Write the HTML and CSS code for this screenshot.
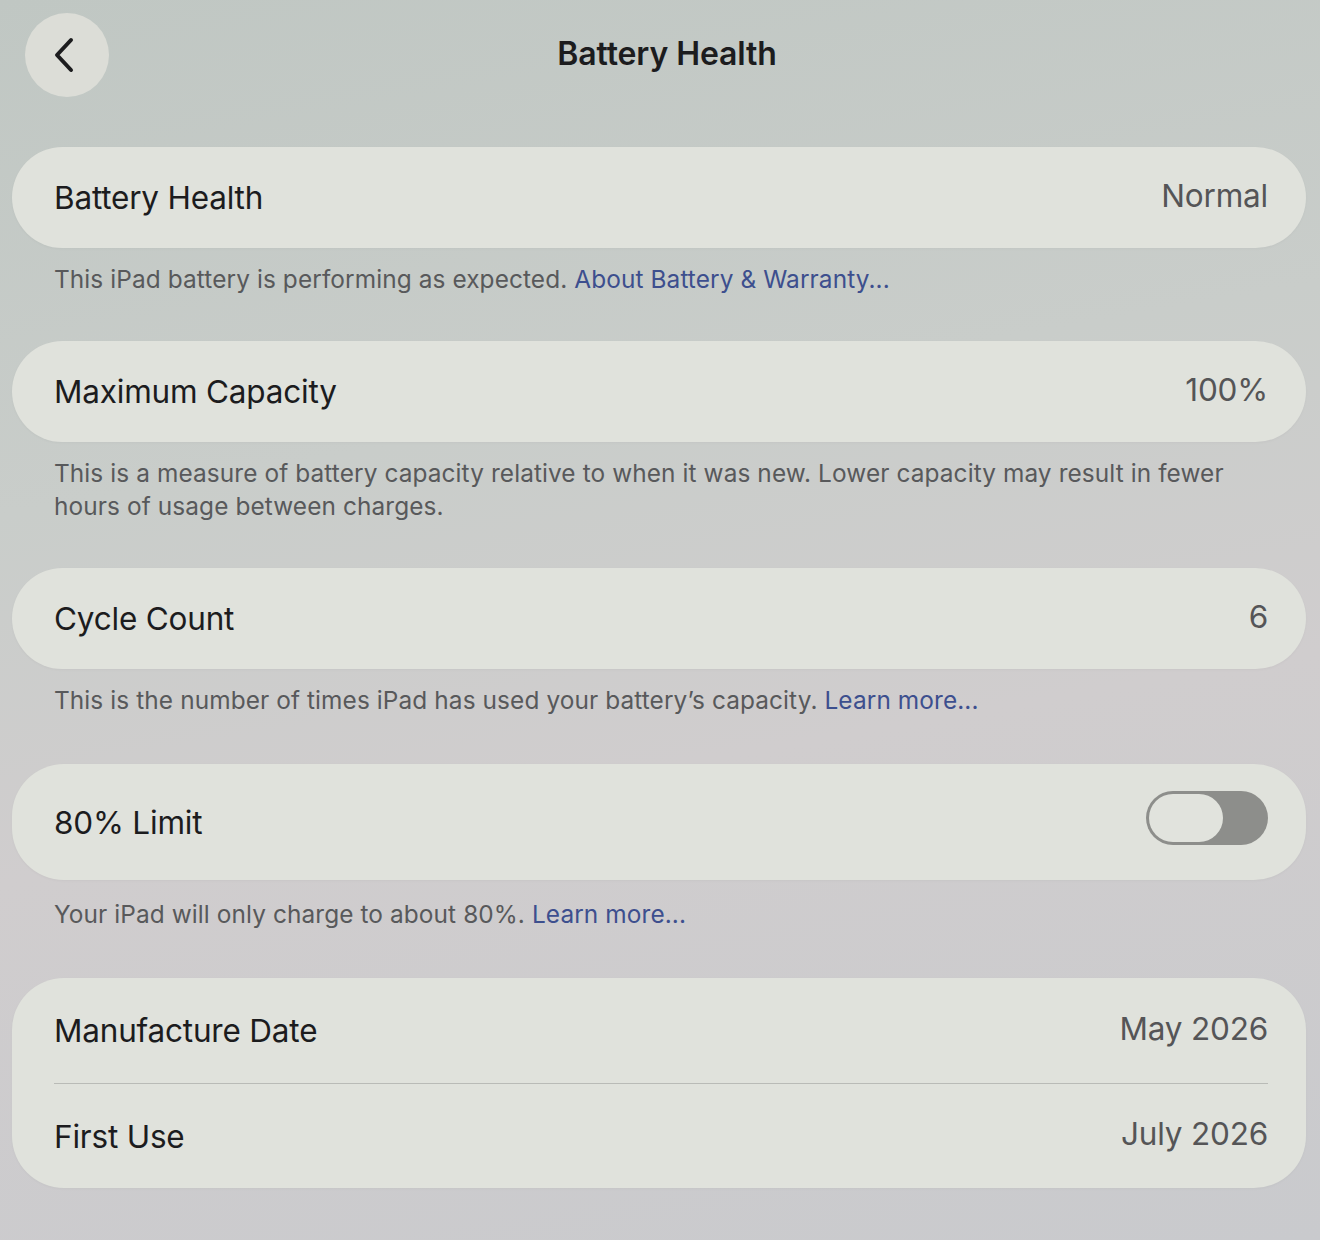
FILE: index.html
```html
<!DOCTYPE html>
<html lang="en">
<head>
  <meta charset="UTF-8" />
  <meta name="viewport" content="width=device-width, initial-scale=1.0" />
  <title>Battery Health</title>
  <link rel="stylesheet" href="styles.css">
</head>
<body>
  <div class="screen">
    <header class="nav">
      <button class="back" aria-label="Back">
        <svg width="28" height="40" viewBox="0 0 28 40">
          <path d="M21 5 L7 20 L21 35" fill="none" stroke="#1c1c1e" stroke-width="4" stroke-linecap="round" stroke-linejoin="round"/>
        </svg>
      </button>
      <h1>Battery Health</h1>
    </header>

    <main class="list">
      <section class="group">
        <div class="card">
          <div class="row">
            <span class="label">Battery Health</span>
            <span class="value">Normal</span>
          </div>
        </div>
        <p class="footer">This iPad battery is performing as expected. <a href="#">About Battery &amp; Warranty...</a></p>
      </section>

      <section class="group">
        <div class="card">
          <div class="row">
            <span class="label">Maximum Capacity</span>
            <span class="value">100%</span>
          </div>
        </div>
        <p class="footer">This is a measure of battery capacity relative to when it was new. Lower capacity may result in fewer hours of usage between charges.</p>
      </section>

      <section class="group">
        <div class="card">
          <div class="row">
            <span class="label">Cycle Count</span>
            <span class="value">6</span>
          </div>
        </div>
        <p class="footer">This is the number of times iPad has used your battery’s capacity. <a href="#">Learn more...</a></p>
      </section>

      <section class="group group-wide">
        <div class="card">
          <div class="row row-tall">
            <span class="label">80% Limit</span>
            <span class="switch"><span class="knob"></span></span>
          </div>
        </div>
        <p class="footer">Your iPad will only charge to about 80%. <a href="#">Learn more...</a></p>
      </section>

      <section class="group">
        <div class="card">
          <div class="row row-date">
            <span class="label">Manufacture Date</span>
            <span class="value">May 2026</span>
          </div>
          <div class="row row-date">
            <span class="label">First Use</span>
            <span class="value">July 2026</span>
          </div>
        </div>
      </section>
    </main>
  </div>
</body>
</html>
```

FILE: styles.css
```css
* {
  margin: 0;
  padding: 0;
  box-sizing: border-box;
}

html {
  font-family: "Inter", "Open Sans", sans-serif;
}

body {
  width: 1320px;
  height: 1240px;
  overflow: hidden;
  color: #1c1c1e;
  background: linear-gradient(170deg, #c0c7c3 0%, #c9cdca 35%, #d0cdce 60%, #c9cacd 100%);
}

.screen {
  display: flex;
  flex-direction: column;
  height: 100%;
}

.nav {
  display: flex;
  align-items: center;
  height: 110px;
  padding: 13px 25px;
  position: relative;
}

.back {
  width: 84px;
  height: 84px;
  border: none;
  border-radius: 50%;
  background-color: #dcddd7;
  display: flex;
  align-items: center;
  justify-content: center;
  padding-right: 6px;
}

.nav h1 {
  position: absolute;
  left: 14px;
  right: 0;
  top: 34px;
  text-align: center;
  font-size: 32px;
  font-weight: 600;
  letter-spacing: -0.1px;
  color: #1c1c1e;
  pointer-events: none;
}

.list {
  display: flex;
  flex-direction: column;
  gap: 45px;
  padding: 37px 14px 0 12px;
}

.group-wide {
  margin-top: 2px;
  margin-bottom: 2px;
}

.group-wide .footer {
  padding-top: 18px;
}

.card {
  background-color: #e0e2dc;
  border-radius: 52px;
  padding: 0 38px 0 42px;
  box-shadow: 0 1px 3px rgba(0, 0, 0, 0.03);
}

.row {
  display: flex;
  align-items: center;
  justify-content: space-between;
  height: 101px;
}

.row-tall {
  height: 116px;
}

.row-date {
  height: 105px;
}

.row-date + .row-date {
  border-top: 1.5px solid #b9bbb7;
}

.label {
  font-size: 31.5px;
  letter-spacing: -0.2px;
  color: #1c1c1e;
}

.value {
  font-size: 31.5px;
  letter-spacing: -0.2px;
  color: #555557;
  margin-top: -5px;
}

.footer {
  padding: 15px 40px 0 42px;
  font-size: 24.4px;
  line-height: 33px;
  letter-spacing: 0.1px;
  color: #58595b;
}

.footer a {
  color: #3d4f8e;
  text-decoration: none;
}

.switch {
  position: relative;
  width: 122px;
  height: 54px;
  border-radius: 27px;
  background-color: #8d8e8b;
  margin-top: -8px;
}

.knob {
  position: absolute;
  left: 3px;
  top: 3px;
  width: 74px;
  height: 48px;
  border-radius: 24px;
  background-color: #e1e3dd;
}
```
